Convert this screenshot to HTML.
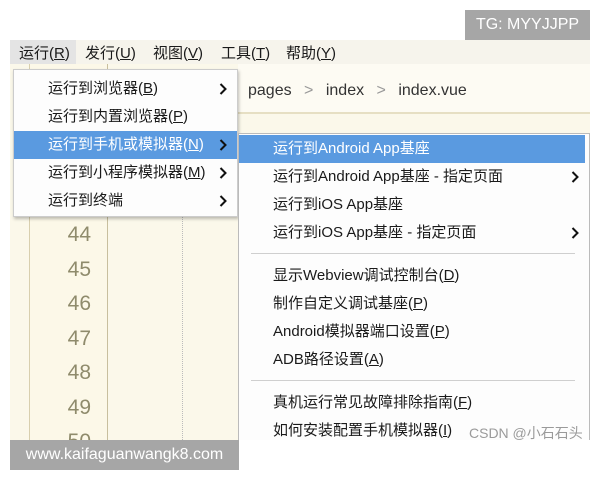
<!DOCTYPE html>
<html><head><meta charset="utf-8"><style>
*{margin:0;padding:0;box-sizing:border-box}
html,body{width:600px;height:480px;overflow:hidden}
body{background:#fff;position:relative;font-family:"Liberation Sans","Noto Sans CJK SC",sans-serif;color:#1a1a1a}
.abs{position:absolute}
.menubar{left:10px;top:40px;width:580px;height:24px;background:#f6f4ec;font-size:15px}
.menubar span{position:absolute;top:2px}
.editor{left:10px;top:64px;width:580px;height:376px;background:#fbf8ea}
.gutter{left:29px;top:64px;width:79px;height:376px;border-left:1px solid #d8cfae;border-right:1px solid #c8bf9e;background:#fcf8e8;overflow:hidden}
.num{position:absolute;right:16px;font-size:21px;color:#8f8b6c}
.dd{left:13px;top:69px;width:225px;height:148px;background:#fdfdfd;border:1px solid #ccc;box-shadow:1px 2px 3px rgba(0,0,0,.25);font-size:15px}
.it{position:absolute;left:0;right:0;height:28px;line-height:28px;padding-left:34px}
.sel{background:#5a9ae0;color:#fff}
.ar{position:absolute;right:10px;top:8px;width:8px;height:12px}
.sub{left:238px;top:133px;width:352px;height:307px;background:#fdfdfd;border:1px solid #bbb;border-bottom:none;font-size:15px}
.sep{position:absolute;left:12px;right:14px;height:1px;background:#cfcfcf}
u{text-decoration:underline}
</style></head><body>
<svg width="0" height="0" style="position:absolute"><defs><symbol id="c" viewBox="0 0 8 12"><path d="M1.5 1 L6.5 6 L1.5 11" fill="none" stroke="#111" stroke-width="2"/></symbol></defs></svg>
<div class="abs" style="left:465px;top:10px;width:125px;height:30px;background:#a6a6a6;color:#fff;font-size:16px;line-height:30px;text-align:center">TG: MYYJJPP</div>
<div class="abs menubar">
<div class="abs" style="left:0;top:0;width:66px;height:24px;background:#e4e4e4"></div>
<span style="left:9px">运行(<u>R</u>)</span><span style="left:75px">发行(<u>U</u>)</span><span style="left:143px">视图(<u>V</u>)</span><span style="left:211px">工具(<u>T</u>)</span><span style="left:276px">帮助(<u>Y</u>)</span>
</div>
<div class="abs editor"></div>
<div class="abs" style="left:238px;top:64px;width:352px;height:50px;background:#fdfbf3;border-bottom:2px solid #e6dfc3"></div>
<div class="abs" style="left:248px;top:82px;font-size:16px;color:#333">pages <span style="color:#999;margin:0 8px">&gt;</span> index <span style="color:#999;margin:0 8px">&gt;</span> index.vue</div>
<div class="abs gutter">
<div class="num" style="top:159px">44</div><div class="num" style="top:194px">45</div><div class="num" style="top:228px">46</div><div class="num" style="top:263px">47</div><div class="num" style="top:297px">48</div><div class="num" style="top:332px">49</div><div class="num" style="top:366px">50</div>
</div>
<div class="abs" style="left:182px;top:210px;height:230px;border-left:1px dotted #bbb"></div>
<div class="abs dd">
<div class="it" style="top:5px">运行到浏览器(<u>B</u>)<svg class="ar"><use href="#c"/></svg></div>
<div class="it" style="top:33px">运行到内置浏览器(<u>P</u>)</div>
<div class="it sel" style="top:61px">运行到手机或模拟器(<u>N</u>)<svg class="ar"><use href="#c"/></svg></div>
<div class="it" style="top:89px">运行到小程序模拟器(<u>M</u>)<svg class="ar"><use href="#c"/></svg></div>
<div class="it" style="top:117px">运行到终端<svg class="ar"><use href="#c"/></svg></div>
</div>
<div class="abs sub">
<div class="it sel" style="top:1px;right:4px">运行到Android App基座</div>
<div class="it" style="top:29px">运行到Android App基座 - 指定页面<svg class="ar"><use href="#c"/></svg></div>
<div class="it" style="top:57px">运行到iOS App基座</div>
<div class="it" style="top:85px">运行到iOS App基座 - 指定页面<svg class="ar"><use href="#c"/></svg></div>
<div class="sep" style="top:119px"></div>
<div class="it" style="top:128px">显示Webview调试控制台(<u>D</u>)</div>
<div class="it" style="top:156px">制作自定义调试基座(<u>P</u>)</div>
<div class="it" style="top:184px">Android模拟器端口设置(<u>P</u>)</div>
<div class="it" style="top:212px">ADB路径设置(<u>A</u>)</div>
<div class="sep" style="top:246px"></div>
<div class="it" style="top:255px">真机运行常见故障排除指南(<u>F</u>)</div>
<div class="it" style="top:283px">如何安装配置手机模拟器(<u>I</u>)</div>
<div class="abs" style="left:230px;top:289px;font-size:14px;color:#9a9a9a">CSDN @小石石头</div>
</div>
<div class="abs" style="left:10px;top:440px;width:229px;height:30px;background:#a6a6a6;color:#fff;font-size:16px;line-height:30px;text-align:center">www.kaifaguanwangk8.com</div>
</body></html>
